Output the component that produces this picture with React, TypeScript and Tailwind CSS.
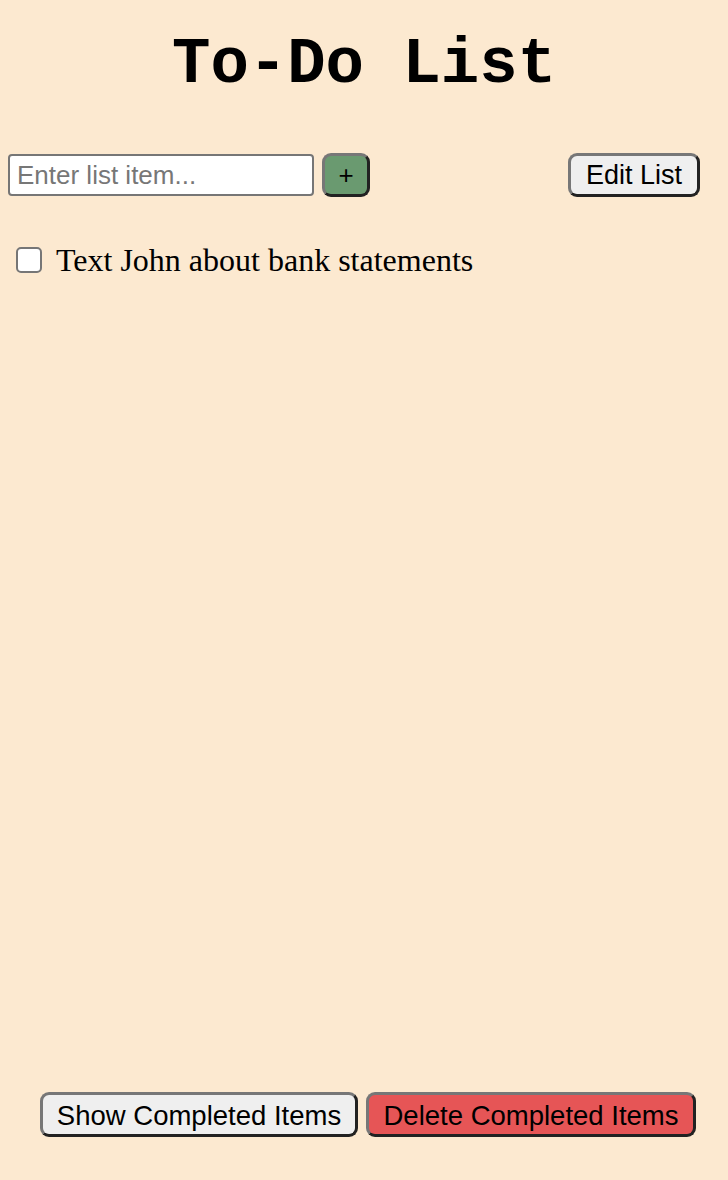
import { useState } from "react"

const SANS = { fontFamily: '"Liberation Sans", Arial, sans-serif' }

// outset-style bevel the reference buttons use
const BEVEL =
    "border-[3px] border-solid border-t-[#777777] border-l-[#777777] border-r-[#222222] border-b-[#222222] rounded-[9px] text-black leading-none"

export default function App() {
    const [items] = useState(["Text John about bank statements"])

    return (
        <div className="min-h-screen bg-[#fce9d0] flex flex-col">
            <h1 className="pt-[33px] text-center text-[64px] font-bold leading-[64px] font-['Liberation_Mono','Courier_New',monospace] text-black">
                To-Do List
            </h1>

            {/* Input row */}
            <div className="mt-[56px] flex items-center justify-between pl-[8px] pr-[28px]" style={SANS}>
                <div className="flex items-center">
                    <input
                        placeholder="Enter list item..."
                        className="h-[42px] w-[306px] rounded-[4px] border-2 border-[#767676] bg-white px-[7px] text-[26px] text-black outline-none placeholder:text-[#777777]"
                    />
                    <button className={`${BEVEL} ml-[8px] h-[44px] w-[48px] bg-[#6a9a70] text-[26px]`}>+</button>
                </div>
                <button className={`${BEVEL} h-[44px] w-[132px] bg-[#efefef] text-[27px]`}>Edit List</button>
            </div>

            {/* Items */}
            <ul className="mt-[45px] pl-[16px]">
                {items.map((item) => (
                    <li key={item} className="flex items-center">
                        <span className="h-[26px] w-[26px] rounded-[5px] border-2 border-[#767676] bg-white" />
                        <span className="ml-[14px] text-[32px] leading-[36px] text-black font-['Liberation_Serif','Times_New_Roman',serif]">
                            {item}
                        </span>
                    </li>
                ))}
            </ul>

            {/* Footer actions */}
            <div className="mt-auto flex justify-end gap-[8px] pb-[43px] pr-[32px]" style={SANS}>
                <button className={`${BEVEL} h-[45px] w-[318px] bg-[#efefef] pt-[2px] text-[27.5px]`}>Show Completed Items</button>
                <button className={`${BEVEL} h-[45px] w-[330px] bg-[#e65556] pt-[2px] text-[27.5px]`}>Delete Completed Items</button>
            </div>
        </div>
    )
}
